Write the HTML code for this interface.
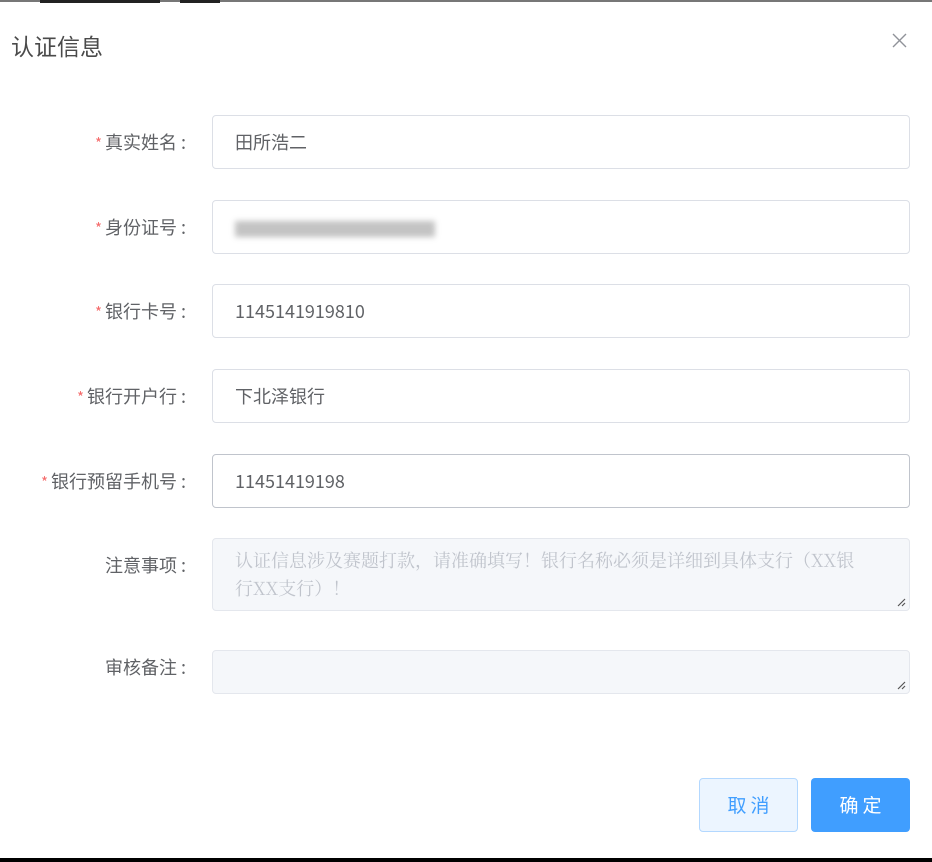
<!DOCTYPE html>
<html><head><meta charset="utf-8"><style>
body{margin:0;width:932px;height:862px;position:relative;background:#fff;font-family:"Noto Sans CJK SC","Liberation Sans",sans-serif;overflow:hidden}
.a{position:absolute}
.lbl{position:absolute;right:746px;font-size:18px;color:#606266;line-height:22px;white-space:nowrap}
.lbl b{color:#f56c6c;font-weight:normal;margin-right:3px;font-size:15px}
.lbl i{font-style:normal;margin-left:4px}
.in{position:absolute;left:212px;width:698px;border:1px solid #dcdfe6;border-radius:4px;box-sizing:border-box;font-size:18px;color:#606266;padding-left:22px}
.ta{background:#f5f7fa;border-color:#e4e7ed}
.grip{position:absolute;right:3px;bottom:3px;width:10px;height:10px}
</style></head><body>
<div class="a" style="left:0;top:0;width:932px;height:2px;background:#777"></div>
<div class="a" style="left:40px;top:0;width:120px;height:3px;background:#222"></div>
<div class="a" style="left:180px;top:0;width:40px;height:3px;background:#222"></div>
<div class="a" style="left:11px;top:31px;font-size:23px;color:#4a4a4a;line-height:28px">认证信息</div>
<svg class="a" style="left:892px;top:33px" width="15" height="15" viewBox="0 0 15 15"><path d="M1 1L14 14M14 1L1 14" stroke="#909399" stroke-width="1.4"/></svg>

<div class="lbl" style="top:131px"><b>*</b>真实姓名<i>:</i></div>
<div class="in" style="top:115px;height:54px;line-height:52px">田所浩二</div>
<div class="lbl" style="top:216px"><b>*</b>身份证号<i>:</i></div>
<div class="in" style="top:200px;height:54px;line-height:52px"><span style="display:inline-block;width:200px;height:16px;background:#aaa;filter:blur(3px);vertical-align:middle;opacity:.7"></span></div>
<div class="lbl" style="top:300px"><b>*</b>银行卡号<i>:</i></div>
<div class="in" style="top:284px;height:54px;line-height:52px">1145141919810</div>
<div class="lbl" style="top:385px"><b>*</b>银行开户行<i>:</i></div>
<div class="in" style="top:369px;height:54px;line-height:52px">下北泽银行</div>
<div class="lbl" style="top:470px"><b>*</b>银行预留手机号<i>:</i></div>
<div class="in" style="top:454px;height:54px;line-height:52px;border-color:#c0c4cc">11451419198</div>
<div class="lbl" style="top:554px">注意事项<i>:</i></div>
<div class="in ta" style="top:538px;height:73px;line-height:28px;padding-top:7px;color:#c0c4cc;font-family:'Noto Serif CJK SC','Liberation Serif',serif;font-size:18px;padding-right:40px">认证信息涉及赛题打款，请准确填写！银行名称必须是详细到具体支行（XX银行XX支行）！<svg class="grip" viewBox="0 0 10 10"><path d="M9 2L2 9M9 6L6 9" stroke="#555" stroke-width="1.2"/></svg></div>
<div class="lbl" style="top:656px">审核备注<i>:</i></div>
<div class="in ta" style="top:650px;height:44px"><svg class="grip" viewBox="0 0 10 10"><path d="M9 2L2 9M9 6L6 9" stroke="#555" stroke-width="1.2"/></svg></div>

<div class="a" style="left:699px;top:778px;width:99px;height:54px;box-sizing:border-box;border:1px solid #b3d8ff;background:#ecf5ff;border-radius:4px;color:#409eff;font-size:19px;line-height:52px;text-align:center;letter-spacing:4px;text-indent:4px">取消</div>
<div class="a" style="left:811px;top:778px;width:99px;height:54px;background:#409eff;border-radius:4px;color:#fff;font-size:19px;line-height:54px;text-align:center;letter-spacing:4px;text-indent:4px">确定</div>
<div class="a" style="left:0;top:858px;width:932px;height:4px;background:#000"></div>
</body></html>
